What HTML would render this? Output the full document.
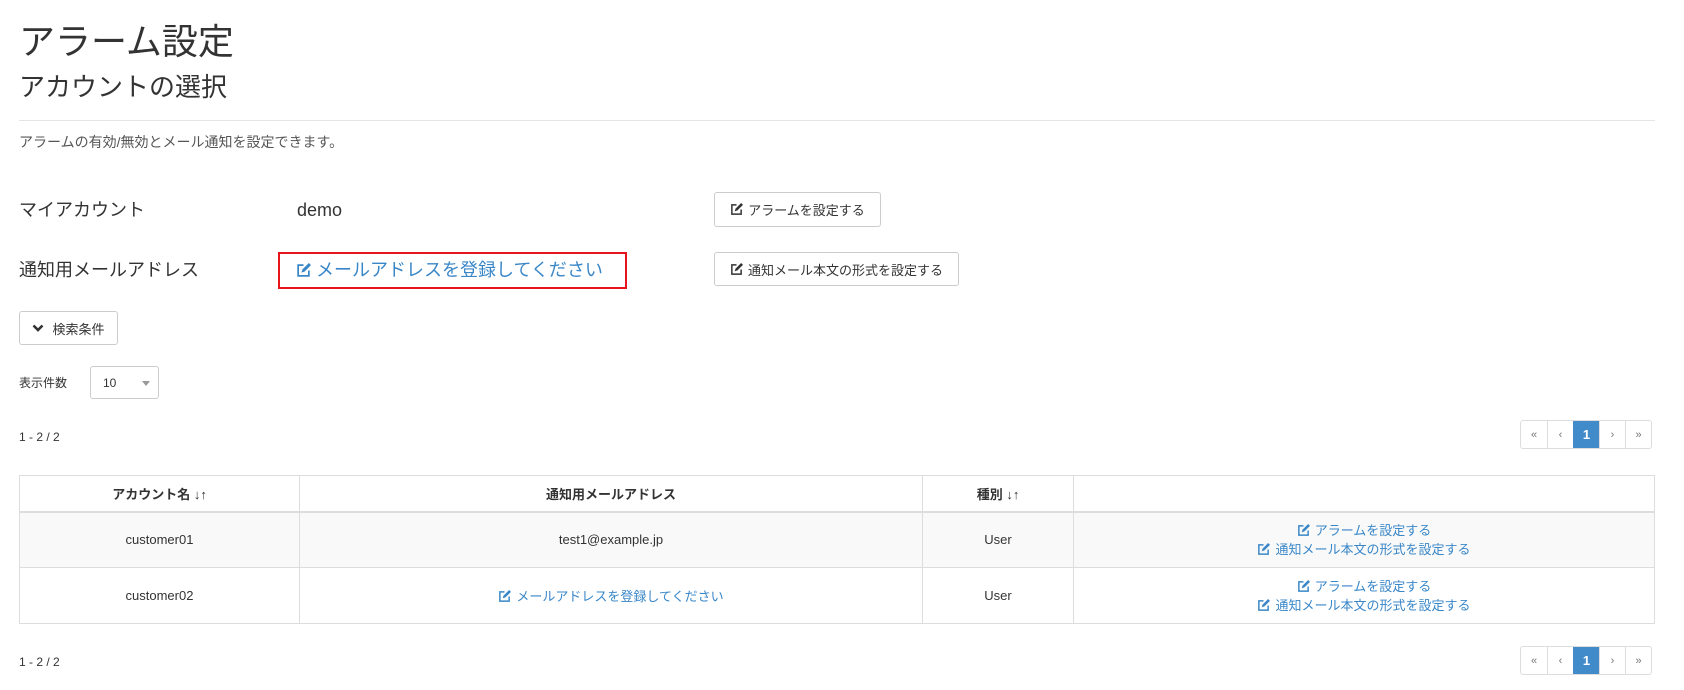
<!DOCTYPE html>
<html><head><meta charset="utf-8"><style>
*{box-sizing:border-box;margin:0;padding:0}
body{width:1684px;height:690px;background:#fff;font-family:"Liberation Sans","Noto Sans CJK JP",sans-serif;color:#333;position:relative;overflow:hidden}
.a{position:absolute;white-space:nowrap}
.btn{position:absolute;border:1px solid #ccc;border-radius:3px;background:#fff;font-size:13px;display:flex;align-items:center;justify-content:center;color:#333}
.ic{display:inline-block;vertical-align:-2px;margin-right:5px}
.link{color:#3a87c8}
.pg{position:absolute;display:flex;border:1px solid #ddd;border-radius:3px;height:29px;overflow:hidden}
.pg div{width:26px;border-left:1px solid #ddd;font-size:11px;color:#777;display:flex;align-items:center;justify-content:center}
.pg div:first-child{border-left:none}
.pg .act{background:#428bca;color:#fff;font-weight:bold;font-size:13px;border-color:#428bca}
table{position:absolute;left:19px;top:475px;width:1636px;border-collapse:collapse;font-size:13px}
td,th{border:1px solid #ddd;text-align:center;vertical-align:middle}
th{height:36px;border-bottom:2px solid #ddd;font-weight:bold}
tr.r1 td{background:#f9f9f9}
td{height:56px}
</style></head><body>
<svg width="0" height="0" style="position:absolute"><defs><symbol id="ed" viewBox="0 0 14 14"><path d="M7 2H2v10h10V7" fill="none" stroke="currentColor" stroke-width="1.6"/><path d="M5 9l1-3 6-6 2 2-6 6z" fill="currentColor"/></symbol></defs></svg>
<div class="a" style="left:19px;top:20px;font-size:36px;line-height:44px">アラーム設定</div>
<div class="a" style="left:19px;top:70px;font-size:26px;line-height:34px">アカウントの選択</div>
<div class="a" style="left:19px;top:120px;width:1636px;border-top:1px solid #e5e5e5"></div>
<div class="a" style="left:19px;top:132px;font-size:14px;color:#555;line-height:20px">アラームの有効/無効とメール通知を設定できます。</div>
<div class="a" style="left:19px;top:198px;font-size:18px;line-height:24px">マイアカウント</div>
<div class="a" style="left:297px;top:198px;font-size:18px;line-height:24px">demo</div>
<div class="a" style="left:19px;top:258px;font-size:18px;line-height:24px">通知用メールアドレス</div>
<div class="a" style="left:278px;top:252px;width:349px;height:37px;border:2px solid #e8141c"></div>
<div class="a link" style="left:296px;top:258px;font-size:18px;line-height:24px"><svg class="ic" width="15" height="15"><use href="#ed"/></svg>メールアドレスを登録してください</div>
<div class="btn" style="left:714px;top:192px;width:167px;height:35px"><svg class="ic" width="13" height="13"><use href="#ed"/></svg>アラームを設定する</div>
<div class="btn" style="left:714px;top:252px;width:245px;height:34px"><svg class="ic" width="13" height="13"><use href="#ed"/></svg>通知メール本文の形式を設定する</div>
<div class="btn" style="left:19px;top:311px;width:99px;height:34px"><svg width="12" height="10" style="margin-right:8px" viewBox="0 0 12 10"><path d="M1.5 2.5L6 7l4.5-4.5" fill="none" stroke="#333" stroke-width="2.6"/></svg>検索条件</div>
<div class="a" style="left:19px;top:374px;font-size:12px;line-height:18px">表示件数</div>
<div class="a" style="left:90px;top:366px;width:69px;height:33px;border:1px solid #ccc;border-radius:3px;font-size:12px;padding:9px 0 0 12px">10<span style="position:absolute;right:8px;top:14px;border-left:4px solid transparent;border-right:4px solid transparent;border-top:5px solid #999"></span></div>
<div class="a" style="left:19px;top:428px;font-size:12px;line-height:18px">1 - 2 / 2</div>
<div class="pg" style="left:1520px;top:420px"><div>«</div><div>‹</div><div class="act">1</div><div>›</div><div>»</div></div>
<table>
<tr><th style="width:280px">アカウント名 <b>↓↑</b></th><th style="width:623px">通知用メールアドレス</th><th style="width:151px">種別 <b>↓↑</b></th><th></th></tr>
<tr class="r1"><td>customer01</td><td>test1@example.jp</td><td>User</td><td class="link" style="line-height:19px"><svg class="ic" width="13" height="13"><use href="#ed"/></svg>アラームを設定する<br><svg class="ic" width="13" height="13"><use href="#ed"/></svg>通知メール本文の形式を設定する</td></tr>
<tr><td>customer02</td><td class="link"><svg class="ic" width="13" height="13"><use href="#ed"/></svg>メールアドレスを登録してください</td><td>User</td><td class="link" style="line-height:19px"><svg class="ic" width="13" height="13"><use href="#ed"/></svg>アラームを設定する<br><svg class="ic" width="13" height="13"><use href="#ed"/></svg>通知メール本文の形式を設定する</td></tr>
</table>
<div class="a" style="left:19px;top:653px;font-size:12px;line-height:18px">1 - 2 / 2</div>
<div class="pg" style="left:1520px;top:646px"><div>«</div><div>‹</div><div class="act">1</div><div>›</div><div>»</div></div>
</body></html>
